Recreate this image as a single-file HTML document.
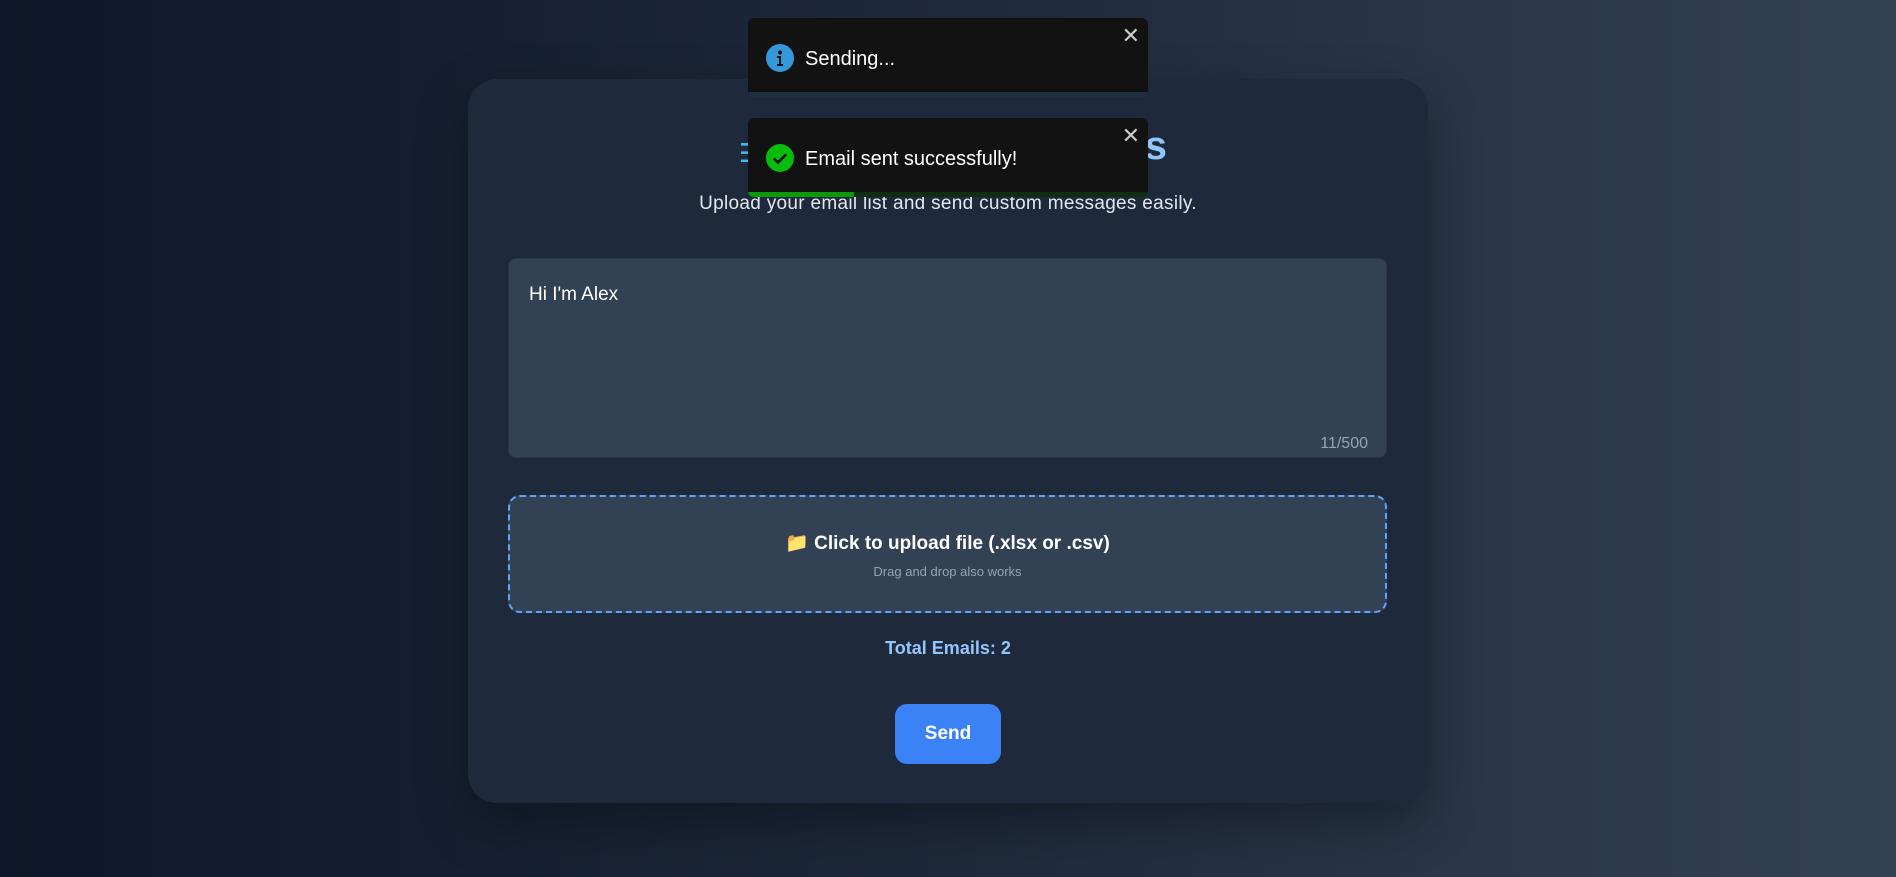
<!DOCTYPE html>
<html><head><meta charset="utf-8"><style>
*{margin:0;padding:0;box-sizing:border-box}
html,body{width:1896px;height:877px;overflow:hidden}
body{background:linear-gradient(90deg,#0f172a 0%,#1e293b 50%,#334155 100%);font-family:"Liberation Sans","DejaVu Sans",sans-serif;position:relative}
.card{position:absolute;left:468px;top:79px;width:960px;height:724px;background:#1e293b;border-radius:29px;box-shadow:0 20px 50px rgba(0,0,0,.35)}
.title{position:absolute;left:739px;top:124px;width:428px;font-size:40px;font-weight:bold;color:#93c5fd;white-space:nowrap;text-align:right}
.title .ic{position:absolute;left:0;top:14px;color:#38bdf8;font-size:26px}
.sub{position:absolute;left:468px;width:960px;top:193px;text-align:center;color:#e2e8f0;font-size:19px;letter-spacing:0.3px}
.ta{position:absolute;left:508px;top:258px;width:879px;height:200px;background:#334155;border-radius:8px;border:1px solid #2b3648}
.ta .t{position:absolute;left:20px;top:25px;color:#fff;font-size:19px}
.ta .c{position:absolute;right:18px;bottom:4px;color:#94a3b8;font-size:16px}
.up{position:absolute;left:508px;top:495px;width:879px;height:118px;background:#334155;border:2px dashed #60a5fa;border-radius:12px;text-align:center}
.up .m{margin-top:34px;color:#fff;font-weight:bold;font-size:19px}
.up .s{margin-top:9px;color:#94a3b8;font-size:13px}
.tot{position:absolute;left:468px;width:960px;top:638px;text-align:center;color:#93c5fd;font-weight:bold;font-size:18px}
.btn{position:absolute;left:895px;top:704px;width:106px;height:60px;background:#3b82f6;border-radius:12px;color:#fff;font-weight:bold;font-size:19px;text-align:center;line-height:60px}
.toast{position:absolute;left:748px;width:400px;height:79px;background:#121212;border-radius:6px;overflow:hidden;color:#fff;font-size:20px}
.toast .txt{position:absolute;left:57px;top:30px}
.toast .x{position:absolute;right:8px;top:5px;color:#ccc;font-size:22px}
.toast svg{position:absolute;left:18px;top:26px}
.bar{position:absolute;left:0;bottom:0;height:5px;width:100%}
</style></head><body>
<div class="card"></div>
<div class="title"><span class="ic">☰</span>BulkMail Campaigns</div>
<div class="sub">Upload your email list and send custom messages easily.</div>
<div class="ta"><div class="t">Hi I'm Alex</div><div class="c">11/500</div></div>
<div class="up"><div class="m"><span style="color:#fbbf24">📁</span> Click to upload file (.xlsx or .csv)</div><div class="s">Drag and drop also works</div></div>
<div class="tot">Total Emails: 2</div>
<div class="btn">Send</div>
<div class="toast" style="top:18px"><svg width="28" height="28" viewBox="0 0 28 28"><circle cx="14" cy="14" r="14" fill="#3498db"/><circle cx="14" cy="8.5" r="2" fill="#121212"/><path d="M11 12h4v8h2v2h-6v-2h2v-6h-2z" fill="#121212"/></svg><div class="txt">Sending...</div><div class="x">✕</div><div class="bar" style="background:#1e2f42"></div></div>
<div class="toast" style="top:118px"><svg width="28" height="28" viewBox="0 0 28 28"><circle cx="14" cy="14" r="14" fill="#07bc0c"/><path d="M8 14.5l4 4 8-8" stroke="#121212" stroke-width="2.6" fill="none"/></svg><div class="txt">Email sent successfully!</div><div class="x">✕</div><div class="bar" style="background:#0f2e10"></div><div class="bar" style="background:#0a9a0a;width:106px"></div></div>
</body></html>
